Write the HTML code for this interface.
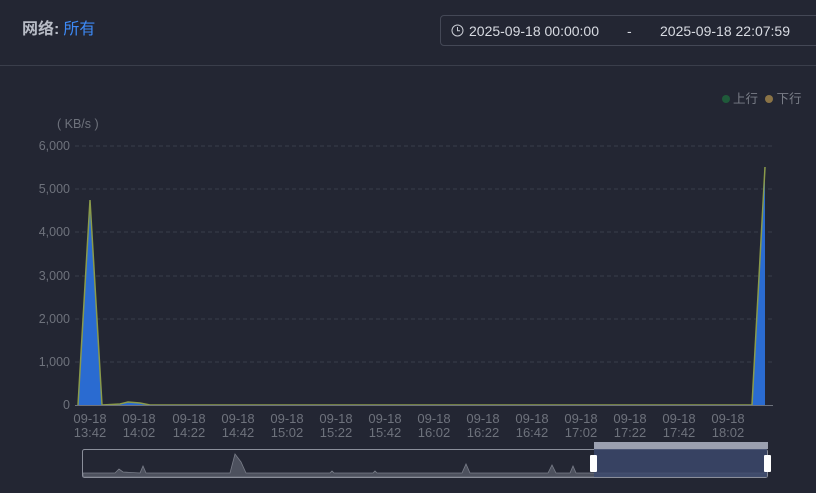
<!DOCTYPE html>
<html><head><meta charset="utf-8"><style>
body{margin:0;width:816px;height:493px;background:#232633;overflow:hidden;font-family:"Liberation Sans","Noto Sans CJK SC",sans-serif;position:relative}
.t{position:absolute;left:22px;top:15px;font-size:16px;color:#b8bcc6;font-weight:bold}
.t span{color:#3d8af7;font-weight:normal;margin-left:4px}
.dp{position:absolute;left:440px;top:15px;width:390px;height:31px;border:1px solid #444856;border-radius:4px;box-sizing:border-box;color:#d8dbe2;font-size:14px}
.line{position:absolute;left:0;top:65px;width:816px;height:1px;background:#3a3e4b}
.lg{position:absolute;top:88px;font-size:12.5px;color:#7a7e88}
</style></head><body>
<div class="t">网络:<span>所有</span></div>
<div class="dp">
<svg style="position:absolute;left:10px;top:8px" width="13" height="13" viewBox="0 0 13 13"><circle cx="6.5" cy="6.5" r="5.5" fill="none" stroke="#c8cbd3" stroke-width="1"/><path d="M6.5 3v3.7h2.5" fill="none" stroke="#c8cbd3" stroke-width="1"/></svg>
<span style="position:absolute;left:28px;top:7px">2025-09-18 00:00:00</span>
<span style="position:absolute;left:186px;top:7px">-</span>
<span style="position:absolute;left:219px;top:7px">2025-09-18 22:07:59</span>
</div>
<div class="line"></div>
<div class="lg" style="left:722px"><span style="display:inline-block;width:8px;height:8px;border-radius:50%;background:#1f5a3a;margin-right:3px"></span>上行 <span style="display:inline-block;width:8px;height:8px;border-radius:50%;background:#8a7346;margin:0 3px 0 4px"></span>下行</div>
<svg style="position:absolute;left:0;top:0" width="816" height="493" font-family="Liberation Sans, sans-serif" font-size="12.5" fill="#6e727c">
<text x="57" y="128">( KB/s )</text>
<g stroke="#3a3e4b" stroke-dasharray="4,3">
<line x1="75" y1="146" x2="773" y2="146"/><line x1="75" y1="189" x2="773" y2="189"/><line x1="75" y1="232" x2="773" y2="232"/><line x1="75" y1="276" x2="773" y2="276"/><line x1="75" y1="319" x2="773" y2="319"/><line x1="75" y1="362" x2="773" y2="362"/>
</g>
<g text-anchor="end"><text x="70" y="150">6,000</text><text x="70" y="193">5,000</text><text x="70" y="236">4,000</text><text x="70" y="280">3,000</text><text x="70" y="323">2,000</text><text x="70" y="366">1,000</text><text x="70" y="409">0</text></g>
<path d="M78 405L90 200L102 405L120 404L128 402L140 403L150 405L752 405L765 167L765 405Z" fill="#2a6bd1"/>
<path d="M78 405L90 200L102 405L120 404L128 402L140 403L150 405L752 405L765 167" fill="none" stroke="#8a9a4a" stroke-width="1.5"/>
<line x1="75" y1="405.5" x2="773" y2="405.5" stroke="#6e727c"/>
<g text-anchor="middle" font-size="13">
<text x="90" y="423">09-18</text><text x="90" y="437">13:42</text>
<text x="139" y="423">09-18</text><text x="139" y="437">14:02</text>
<text x="189" y="423">09-18</text><text x="189" y="437">14:22</text>
<text x="238" y="423">09-18</text><text x="238" y="437">14:42</text>
<text x="287" y="423">09-18</text><text x="287" y="437">15:02</text>
<text x="336" y="423">09-18</text><text x="336" y="437">15:22</text>
<text x="385" y="423">09-18</text><text x="385" y="437">15:42</text>
<text x="434" y="423">09-18</text><text x="434" y="437">16:02</text>
<text x="483" y="423">09-18</text><text x="483" y="437">16:22</text>
<text x="532" y="423">09-18</text><text x="532" y="437">16:42</text>
<text x="581" y="423">09-18</text><text x="581" y="437">17:02</text>
<text x="630" y="423">09-18</text><text x="630" y="437">17:22</text>
<text x="679" y="423">09-18</text><text x="679" y="437">17:42</text>
<text x="728" y="423">09-18</text><text x="728" y="437">18:02</text>
</g>
<path d="M83 473L115 473L119 469L123 472L140 473L143 466L146 473L230 473L235 454L241 462L246 473L330 473L332 471L334 473L373 473L375 471L377 473L462 473L466 464L470 473L548 473L552 465L556 473L570 473L573 466L576 473L767 473L767 477L83 477Z" fill="#4d515e" stroke="#7a7e8a" stroke-width="0.8"/>
<rect x="82.5" y="449.5" width="685" height="28" rx="2" fill="none" stroke="#8a8e9a"/>
<rect x="594" y="449" width="173" height="28" fill="#3c4a6e" opacity="0.8"/>
<rect x="594" y="442" width="174" height="7" fill="#9ba0b0"/>
<rect x="590" y="455" width="7" height="17" rx="1" fill="#fff"/>
<rect x="764" y="455" width="7" height="17" rx="1" fill="#fff"/>
</svg>
</body></html>
